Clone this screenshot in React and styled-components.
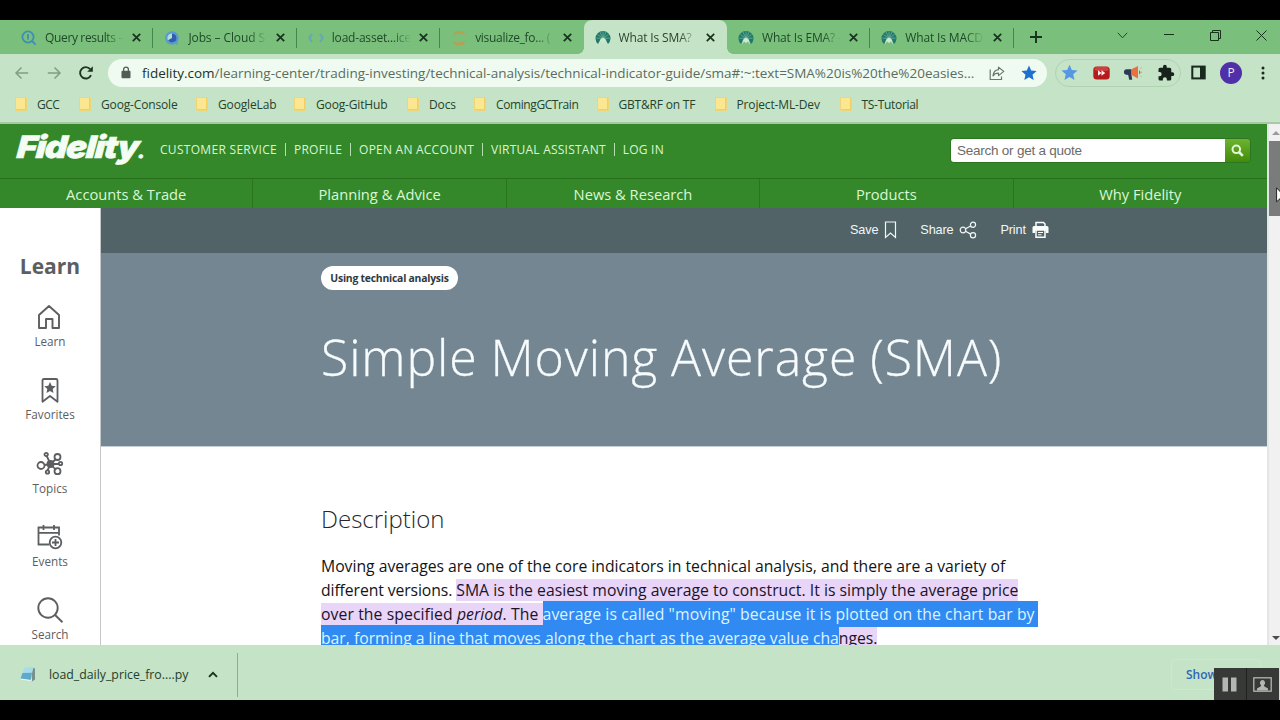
import styled, { createGlobalStyle } from 'styled-components'

const GlobalStyle = createGlobalStyle`
  * {
    box-sizing: border-box;
  }
  body {
    margin: 0;
    background: #000000;
    overflow: hidden;
    font-family: 'Open Sans', 'Noto Sans', sans-serif;
  }
  svg {
    display: block;
    flex: none;
  }
`

const StyledScreen = styled.div`
  position: relative;
  display: flex;
  flex-direction: column;
  width: 1280px;
  height: 720px;
  padding: 20px 0;
  background: #000000;
  overflow: hidden;
  white-space: nowrap;
`

/* tab strip */
const StyledTabStrip = styled.div`
  display: flex;
  height: 34px;
  padding-left: 10px;
  background: #7abf7b;
`

const StyledTab = styled.div`
  position: relative;
  display: flex;
  align-items: center;
  width: 143.4px;
  padding: 1px 12px 0 11px;
  border-radius: 8px 8px 0 0;
  background: ${({ $active }) => ($active ? '#c5e3c6' : 'transparent')};
  color: ${({ $active }) => ($active ? '#294330' : '#1f4a29')};
  &::before {
    content: '';
    position: absolute;
    display: ${({ $active }) => ($active ? 'block' : 'none')};
    left: -6px;
    right: -6px;
    bottom: 0;
    height: 6px;
    background:
      radial-gradient(circle at 0 0, transparent 5.5px, #c5e3c6 6px) left / 6px 6px no-repeat,
      radial-gradient(circle at 100% 0, transparent 5.5px, #c5e3c6 6px) right / 6px 6px no-repeat;
  }
  &::after {
    content: '';
    position: absolute;
    right: 0;
    top: 8px;
    width: 1px;
    height: 20px;
    background: ${({ $divider }) => ($divider ? '#44874a' : 'transparent')};
  }
`

const StyledTabTitle = styled.div`
  width: 82px;
  margin-left: 8px;
  overflow: hidden;
  font-size: 12px;
  line-height: 20px;
  letter-spacing: ${({ $spacing }) => $spacing || '-0.2px'};
  mask-image: linear-gradient(90deg, #000 74%, transparent 96%);
`

const StyledTabClose = styled.div`
  margin-left: auto;
`

const StyledNewTab = styled.div`
  display: flex;
  align-items: center;
  margin-left: 16px;
`

const StyledWindowControls = styled.div`
  display: grid;
  grid-template-columns: repeat(4, 46.3px);
  place-items: center;
  height: 30px;
  margin-left: auto;
  margin-right: -5px;
`

/* address bar */
const StyledToolbar = styled.div`
  display: flex;
  align-items: center;
  height: 37px;
  padding: 0 10px 0 14px;
  background: #c5e3c6;
`

const StyledNavButtons = styled.div`
  display: flex;
  gap: 16px;
  width: 94px;
`

const StyledOmnibox = styled.div`
  display: flex;
  align-items: center;
  width: 939px;
  height: 28px;
  padding: 0 10px 0 13px;
  border-radius: 14px;
  background: #effbf0;
`

const StyledUrl = styled.div`
  margin-left: 11px;
  color: #5d6b60;
  font-size: 13.5px;
  letter-spacing: -0.02px;
  b {
    color: #203326;
    font-weight: 400;
  }
`

const StyledOmniboxActions = styled.div`
  display: flex;
  align-items: center;
  gap: 16px;
  margin-left: auto;
`

const StyledExtensions = styled.div`
  display: flex;
  align-items: center;
  gap: 14.5px;
  height: 28px;
  margin-left: 8px;
  padding: 0 5px;
  border: 1px solid #b0d3b2;
  border-radius: 14px;
`

const StyledToolbarEnd = styled.div`
  display: flex;
  align-items: center;
  gap: 14px;
  margin-left: auto;
`

const StyledAvatar = styled.div`
  width: 22px;
  height: 22px;
  border-radius: 50%;
  background: #5030a8;
  color: #f1eafa;
  font-size: 12px;
  line-height: 22px;
  text-align: center;
`

/* bookmarks */
const StyledBookmarks = styled.div`
  display: flex;
  height: 33px;
  padding: 0 0 5px 15px;
  background: #c5e3c6;
  border-bottom: 2px solid #a9c8a8;
`

const StyledBookmark = styled.div`
  display: flex;
  align-items: center;
  gap: 10px;
  width: ${({ $width }) => $width}px;
  color: #25432c;
  font-size: 12px;
  letter-spacing: ${({ $spacing }) => $spacing || '-0.15px'};
`

const StyledFolder = styled.div`
  width: 12px;
  height: 14px;
  border: 1px solid #eed676;
  border-radius: 1px;
  background: #fbe792;
  box-shadow: inset -1px -1px 0 #f2cf62;
`

/* page */
const StyledPage = styled.div`
  display: flex;
  flex: 1;
  min-height: 0;
  background: #ffffff;
`

const StyledSite = styled.div`
  display: flex;
  flex-direction: column;
  width: 1267px;
  overflow: hidden;
`

const StyledHeader = styled.div`
  display: flex;
  align-items: center;
  flex: none;
  height: 54px;
  padding: 0 16px;
  background: #358829;
`

const StyledLogo = styled.div`
  width: 144px;
  color: #f4fdf3;
  font-family: 'Inter', 'Liberation Sans', sans-serif;
  font-size: 31px;
  font-style: italic;
  font-weight: 900;
  letter-spacing: -1.1px;
  line-height: 40px;
  margin-top: -3px;
  transform: scaleX(1.12) skewX(-4deg);
  transform-origin: 0 75%;
  -webkit-text-stroke: 0.6px #f4fdf3;
  small {
    font-size: 18px;
    letter-spacing: 0;
  }
`

const StyledUserLinks = styled.div`
  display: flex;
  align-items: center;
  margin-top: -4px;
`

const StyledUserLink = styled.div`
  padding: 0 8px;
  border-left: ${({ $first }) => ($first ? 'none' : '1px solid #b4deae')};
  color: #d9f7d5;
  font-size: 12px;
  letter-spacing: 0.23px;
  line-height: 13px;
  &:first-child {
    padding-left: 0;
    letter-spacing: 0.3px;
  }
`

const StyledSearch = styled.div`
  display: flex;
  width: 301px;
  height: 25px;
  margin: -2px 0 0 auto;
  border: 1px solid #2d7620;
  border-radius: 4px;
  overflow: hidden;
`

const StyledSearchInput = styled.div`
  flex: 1;
  padding-left: 6px;
  background: #ffffff;
  color: #6b6b6b;
  font-family: 'Liberation Sans', sans-serif;
  font-size: 13.5px;
  letter-spacing: -0.24px;
  line-height: 23px;
`

const StyledSearchButton = styled.div`
  display: grid;
  place-items: center;
  width: 25px;
  background: linear-gradient(#6db32f, #438b0d);
`

const StyledMainNav = styled.div`
  display: grid;
  grid-template-columns: repeat(5, 1fr);
  flex: none;
  height: 30px;
  border-top: 1px solid #26701b;
  background: #358829;
`

const StyledNavItem = styled.div`
  border-right: 1px solid #2a741c;
  color: #d9f7d5;
  font-size: 14.7px;
  font-weight: 500;
  line-height: 31px;
  text-align: center;
  &:last-child {
    border-right: none;
  }
`

const StyledBody = styled.div`
  display: flex;
  flex: 1;
  min-height: 0;
`

const StyledSidebar = styled.div`
  display: flex;
  flex-direction: column;
  flex: none;
  align-items: center;
  width: 101px;
  padding-top: 43px;
  border-right: 1px solid #c4c6c8;
  color: #5c5e60;
`

const StyledSidebarTitle = styled.div`
  font-size: 21px;
  font-weight: 700;
  line-height: 30px;
`

const StyledSidebarItem = styled.div`
  display: flex;
  flex-direction: column;
  flex: none;
  align-items: center;
  gap: 2px;
  height: 73.3px;
  font-size: 11.7px;
  line-height: 16px;
`

const StyledSidebarList = styled.div`
  padding-top: 22px;
`

const StyledArticle = styled.div`
  flex: 1;
  overflow: hidden;
`

const StyledActions = styled.div`
  display: flex;
  align-items: center;
  gap: 23px;
  height: 45px;
  padding: 0 0 1px 749px;
  background: #516367;
`

const StyledAction = styled.div`
  display: flex;
  align-items: center;
  gap: 6px;
  color: #f1f7f8;
  font-family: 'Liberation Sans', sans-serif;
  font-size: 12.7px;
  letter-spacing: -0.15px;
`

const StyledHero = styled.div`
  height: 194px;
  padding: 13px 0 0 220px;
  border-bottom: 1px solid #c5cfd5;
  background: #748691;
`

const StyledTag = styled.div`
  width: 137px;
  height: 24px;
  border-radius: 12px;
  background: #ffffff;
  color: #303a3f;
  font-size: 10.4px;
  font-weight: 700;
  letter-spacing: -0.23px;
  line-height: 24px;
  text-align: center;
`

const StyledTitle = styled.h1`
  margin: 32px 0 0;
  color: #f6fbfd;
  font-size: 50px;
  font-weight: 300;
  letter-spacing: 0.9px;
  word-spacing: -1px;
  line-height: 70px;
  -webkit-text-stroke: 0.3px #f6fbfd;
`

const StyledContent = styled.div`
  padding: 54px 0 0 220px;
`

const StyledHeading = styled.h2`
  margin: 0;
  color: #24282b;
  font-size: 24px;
  font-weight: 300;
  line-height: 36px;
`

const StyledText = styled.p`
  margin: 17px 0 0;
  color: #121417;
  font-size: 15.75px;
  line-height: 24px;
`

const StyledLine = styled.span`
  display: block;
  height: 24px;
  letter-spacing: ${({ $spacing }) => $spacing || '-0.02px'};
`

const StyledMark = styled.mark`
  background: #e8d5f7;
  color: #21122c;
  letter-spacing: ${({ $spacing }) => $spacing || 'inherit'};
`

const StyledSelection = styled.span`
  padding: ${({ $tail }) => ($tail ? '2px 3px 2px 0' : '2px 0')};
  background: #308af2;
  color: #dff3ff;
`

/* scrollbar */
const StyledScrollbar = styled.div`
  display: flex;
  flex-direction: column;
  justify-content: space-between;
  width: 13px;
  padding-bottom: 5px;
  border-left: 2px solid #e3e7e3;
  background: #f1f1f1;
`

const StyledScrollTrack = styled.div`
  padding-top: 7px;
`

const StyledThumb = styled.div`
  height: 75px;
  margin-top: 6px;
  background: #7a7b7b;
`

const StyledArrow = styled.div`
  width: 0;
  height: 0;
  margin-left: 3px;
  border: 4px solid transparent;
  border-top: ${({ $down }) => ($down ? '4px solid #4c4c4c' : 'none')};
  border-bottom: ${({ $down }) => ($down ? 'none' : '4px solid #9b9b9b')};
`

/* downloads */
const StyledDownloads = styled.div`
  display: flex;
  align-items: center;
  height: 55px;
  padding-left: 19px;
  background: #c5e3c6;
`

const StyledDownload = styled.div`
  display: flex;
  align-items: center;
  gap: 12px;
  width: 219px;
  height: 44px;
  margin-top: 4px;
  border-right: 1px solid #8cae8e;
  color: #233f2b;
  font-size: 12.3px;
`

const StyledCaret = styled.div`
  margin-left: 8px;
`

const StyledShowAll = styled.div`
  width: 90px;
  height: 31px;
  margin: 3px 19px 0 auto;
  padding-left: 14px;
  border: 1px solid #cde8cf;
  border-radius: 4px;
  color: #2d67b5;
  font-size: 12px;
  font-weight: 600;
  line-height: 29px;
`

const StyledRecorder = styled.div`
  position: absolute;
  right: 1px;
  bottom: 20px;
  display: grid;
  grid-template-columns: 32px 32px;
  gap: 1px;
  width: 65px;
  height: 32px;
  background: #1f2220;
`

const StyledRecorderButton = styled.div`
  display: grid;
  place-items: center;
  padding: 1px 2px 0 0;
  background: #363936;
`

const StyledCursor = styled.div`
  position: absolute;
  top: 187px;
  left: 1276px;
`

const QueryIcon = () => (
  <svg width="16" height="16" viewBox="0 0 16 16" fill="none" stroke="#3d8fb4" strokeWidth="1.8">
    <circle cx="7" cy="7" r="5.6" />
    <path d="M11 11l3.6 3.6M7 4v5.5" />
  </svg>
)

const JobsIcon = () => (
  <svg width="16" height="16" viewBox="0 0 16 16">
    <path d="M8 1.2a6.8 6.8 0 1 0 3.6 12.5l2 1.4v-3.3A6.8 6.8 0 0 0 8 1.2z" fill="#5b9cce" />
    <circle cx="8" cy="8" r="4.6" fill="#b7dcd0" />
    <path d="M8 3.4a4.6 4.6 0 1 1-4 6.8L8 8z" fill="#2c5fb4" />
  </svg>
)

const CodeIcon = () => (
  <svg width="16" height="16" viewBox="0 0 16 16" fill="none" stroke="#64a8b4" strokeWidth="2">
    <path d="M4 4L1.400 8l2.600 4M12 4l2.600 4-2.600 4" />
  </svg>
)

const JupyterIcon = () => (
  <svg width="16" height="16" viewBox="0 0 16 16" fill="#b99f50">
    <path d="M1.500 5.500C3 -.5 13 -.5 14.500 5.500 11 3.600 5 3.600 1.500 5.500zM1.500 11c1.500 6 11.500 6 13 0-3.500 1.900-9.500 1.900-13 0z" />
  </svg>
)

const FidelityIcon = () => (
  <svg width="16" height="16" viewBox="0 0 16 16">
    <path d="M3 14A7.500 7.500 0 1 1 13 14l-1.500-2.500-7 0z" fill="#22796a" />
    <path d="M8 8.500L2.500 4.500M8 8.500L5 2M8 8.500V1.500M8 8.500l3-6.500M8 8.500l5.500-4M8 8.500l-6.500-.4M8 8.500l6.500-.4" stroke="#9ad0b6" strokeWidth=".5" />
    <path d="M3.800 14.500L5 10a3.200 3.200 0 0 1 6 0l1.200 4.500-2.200-3-2 1.500-2-1.500z" fill="#cdebd3" />
  </svg>
)

const CloseIcon = () => (
  <svg width="9" height="9" viewBox="0 0 9 9" stroke="#17321c" strokeWidth="1.7">
    <path d="M.8.800l7.400 7.400M8.200.800L.8 8.200" />
  </svg>
)

const BackIcon = ({ forward }) => (
  <svg width="16" height="16" viewBox="0 0 16 16" fill="none" stroke="#80a083" strokeWidth="1.500">
    <path d={forward ? 'M1.800 8h12M8.500 2.500L14 8l-5.500 5.500' : 'M14.200 8h-12M7.500 2.500L2 8l5.500 5.500'} />
  </svg>
)

const ReloadIcon = () => (
  <svg width="16" height="16" viewBox="0 0 16 16" fill="none" stroke="#1f3523" strokeWidth="1.900">
    <path d="M13 10.200A5.700 5.700 0 1 1 12.200 4.200" />
    <path d="M14.800 1.200v5.600H9.200z" fill="#1f3523" stroke="none" />
  </svg>
)

const LockIcon = () => (
  <svg width="10" height="13" viewBox="0 0 10 13">
    <rect x=".5" y="4.800" width="9" height="7.500" rx="1" fill="#505c54" />
    <path d="M2.600 5V3.500a2.400 2.400 0 0 1 4.800 0V5" fill="none" stroke="#505c54" strokeWidth="1.300" />
  </svg>
)

const SendIcon = () => (
  <svg width="16" height="16" viewBox="0 0 16 16" fill="none" stroke="#69766d" strokeWidth="1.200">
    <path d="M1.200 4.500v10h11.300v-3" />
    <path d="M9.500 2.200l5.300 4.200-5.300 4.200V8.200c-2.800 0-4.400.8-5.500 2.700.3-3.400 2.200-5.700 5.500-6.200z" strokeLinejoin="round" />
  </svg>
)

const StarIcon = ({ color, size = 16 }) => (
  <svg width={size} height={size} viewBox="0 0 16 16" fill={color}>
    <path d="M8 .6l2.200 5 5.400.5-4.100 3.600 1.200 5.400L8 12.300l-4.700 2.800 1.200-5.400L.4 6.100l5.400-.5z" />
  </svg>
)

const ForwardBadge = () => (
  <svg width="17" height="14" viewBox="0 0 17 14">
    <rect x=".3" y=".5" width="16.400" height="13" rx="3.500" fill="#b51a1d" />
    <rect x="1.500" y="1" width="14" height="4" rx="2" fill="#cf3f3e" />
    <path d="M5 4.300l3.500 2.700L5 9.700zM8.500 4.300L12.300 7 8.500 9.700z" fill="#ffeeee" />
  </svg>
)

const MegaphoneIcon = () => (
  <svg width="18" height="16" viewBox="0 0 18 16">
    <path d="M7.500 4.200H3a2.600 2.600 0 0 0-.5 5.600L4.200 10l1 4.800h3L7.500 10z" fill="#2d3a55" />
    <path d="M7.500 4.200L14 1v12.400L7.500 10z" fill="#e9703f" />
    <path d="M15 5.200a2.300 2.300 0 0 1 0 4.200z" fill="#c9573c" />
    <path d="M16.500 3.500l1-.8M17 7.300h1M16.500 11l1 .8" stroke="#e9904f" />
  </svg>
)

const PuzzleIcon = () => (
  <svg width="18" height="18" viewBox="0 0 24 24" fill="#17231a">
    <path d="M20.500 11H19V7a2 2 0 0 0-2-2h-4V3.500a2.500 2.500 0 0 0-5 0V5H4a2 2 0 0 0-2 2v3.800h1.500a2.700 2.700 0 0 1 0 5.400H2V20a2 2 0 0 0 2 2h3.800v-1.500a2.700 2.700 0 0 1 5.400 0V22H17a2 2 0 0 0 2-2v-4h1.500a2.500 2.500 0 0 0 0-5z" />
  </svg>
)

const PanelIcon = () => (
  <svg width="15" height="15" viewBox="0 0 15 15">
    <rect x="1.300" y="1.600" width="12.400" height="11.800" fill="none" stroke="#1a291d" strokeWidth="2" />
    <path d="M9 1h5v13H9z" fill="#1a291d" />
  </svg>
)

const DotsIcon = () => (
  <svg width="14" height="16" viewBox="0 0 14 16" fill="#1a291d">
    <circle cx="7" cy="3" r="1.500" />
    <circle cx="7" cy="8" r="1.500" />
    <circle cx="7" cy="13" r="1.500" />
  </svg>
)

const SearchGlyph = () => (
  <svg width="13" height="13" viewBox="0 0 13 13" fill="none" stroke="#e6f7d8">
    <circle cx="5.300" cy="5.300" r="3.800" strokeWidth="2" />
    <path d="M8 8l3.800 3.800" strokeWidth="2.500" />
  </svg>
)

const BookmarkIcon = () => (
  <svg width="13" height="18" viewBox="0 0 13 18" fill="none" stroke="#f1f7f8" strokeWidth="1.200">
    <path d="M1.500 1h10v15.500l-5-4.500-5 4.500z" />
  </svg>
)

const ShareIcon = () => (
  <svg width="18" height="18" viewBox="0 0 18 18" fill="none" stroke="#f1f7f8" strokeWidth="1.200">
    <circle cx="4" cy="9" r="2.800" />
    <circle cx="14" cy="3.800" r="2.600" />
    <circle cx="14" cy="14.300" r="2.600" />
    <path d="M6.500 7.700l5.200-2.700M6.500 10.300l5.200 2.800" />
  </svg>
)

const PrintIcon = () => (
  <svg width="17" height="18" viewBox="0 0 17 18">
    <path d="M4 5V1.500h7.500L13 3v2" fill="none" stroke="#fbfefe" strokeWidth="1.500" />
    <path d="M2 5h13a1.500 1.500 0 0 1 1.500 1.500V12H14V9.500H3V12H.5V6.500A1.500 1.500 0 0 1 2 5z" fill="#fbfefe" />
    <path d="M4 9v7.300h9V9z" fill="#516367" stroke="#fbfefe" strokeWidth="1.500" />
    <path d="M6 11.500h5M6 13.800h3.500" stroke="#fbfefe" />
  </svg>
)

const HomeIcon = () => (
  <svg width="28" height="28" viewBox="0 0 28 28" fill="none" stroke="#5c5e60" strokeWidth="1.900" strokeLinejoin="round">
    <path d="M3 12L13 3l10 9v13h-6.500v-9h-6.500v9H3z" />
  </svg>
)

const FavoriteIcon = () => (
  <svg width="28" height="28" viewBox="0 0 28 28" fill="none" stroke="#5c5e60" strokeWidth="1.800" strokeLinejoin="round">
    <path d="M6.500 4.500Q6.500 3 8 3h12q1.500 0 1.500 1.500v21.300L14 20l-7.500 5.800z" />
    <path d="M14 6l1.700 3.700 4 .5-3 2.700.8 4-3.500-2-3.500 2 .8-4-3-2.700 4-.5z" fill="#5c5e60" stroke="none" />
  </svg>
)

const TopicsIcon = () => (
  <svg width="28" height="28" viewBox="0 0 28 28" fill="none" stroke="#5c5e60" strokeWidth="1.800">
    <path d="M14.500 14L10.500 5.500M14.500 14l5.500-5M14.500 14h8M14.500 14l5.500 6M14.500 14l-3 6.500M14.500 14l-6 1" />
    <circle cx="14.500" cy="14" r="3" fill="#5c5e60" />
    <circle cx="5" cy="15.500" r="3.500" />
    <circle cx="10.200" cy="4.500" r="1.700" />
    <circle cx="21.500" cy="7" r="3" />
    <circle cx="24.500" cy="13.500" r="1.700" />
    <circle cx="21.500" cy="21.200" r="3" />
    <circle cx="11.500" cy="22" r="1.700" />
  </svg>
)

const EventsIcon = () => (
  <svg width="28" height="28" viewBox="0 0 28 28" fill="none" stroke="#5c5e60" strokeWidth="1.800">
    <path d="M23 12.500V4.500H2.500v17H13M2.500 9.800H23M7.500 2v5M18 2v5" />
    <circle cx="19.500" cy="19.500" r="5.800" />
    <path d="M19.500 16v7M16 19.500h7" />
  </svg>
)

const LearnSearchIcon = () => (
  <svg width="28" height="28" viewBox="0 0 28 28" fill="none" stroke="#5c5e60" strokeWidth="1.900">
    <circle cx="12" cy="12" r="9.700" />
    <path d="M18.800 18.800l7.700 7.500" />
  </svg>
)

const FileIcon = () => (
  <svg width="18" height="17" viewBox="0 0 18 17">
    <path d="M12.500 1.500l3.500 1v11l-3 2z" fill="#78908e" />
    <path d="M5.500 1.500l9-.5-3 13-10-1.500z" fill="#a9dcea" />
    <path d="M3.500 7l9.500-.3-1.500 7.300-10-1.300z" fill="#5fa9cb" />
    <path d="M1.500 13l10 1.500 1.500-1" fill="none" stroke="#eaf8f5" />
  </svg>
)

const tabs = [
  { title: 'Query results – ', icon: <QueryIcon />, divider: true, spacing: '-0.35px' },
  { title: 'Jobs – Cloud Sc', icon: <JobsIcon />, divider: true, spacing: '-0.1px' },
  { title: 'load-asset...ice', icon: <CodeIcon />, divider: true },
  { title: 'visualize_fo... (', icon: <JupyterIcon />, spacing: '-0.3px' },
  { title: 'What Is SMA?', icon: <FidelityIcon />, active: true, spacing: '-0.15px' },
  { title: 'What Is EMA? -', icon: <FidelityIcon />, divider: true, spacing: '-0.15px' },
  { title: 'What Is MACD', icon: <FidelityIcon />, divider: true, spacing: '-0.15px' },
]

const bookmarks = [
  { name: 'GCC', width: 64, spacing: '-0.5px' },
  { name: 'Goog-Console', width: 117 },
  { name: 'GoogleLab', width: 98 },
  { name: 'Goog-GitHub', width: 113 },
  { name: 'Docs', width: 67 },
  { name: 'ComingGCTrain', width: 122.5, spacing: '-0.4px' },
  { name: 'GBT&RF on TF', width: 118, spacing: '-0.2px' },
  { name: 'Project-ML-Dev', width: 125 },
  { name: 'TS-Tutorial', width: 80, spacing: '-0.3px' },
]

const userLinks = ['CUSTOMER SERVICE', 'PROFILE', 'OPEN AN ACCOUNT', 'VIRTUAL ASSISTANT', 'LOG IN']

const navItems = ['Accounts & Trade', 'Planning & Advice', 'News & Research', 'Products', 'Why Fidelity']

const sidebarItems = [
  { name: 'Learn', icon: <HomeIcon /> },
  { name: 'Favorites', icon: <FavoriteIcon /> },
  { name: 'Topics', icon: <TopicsIcon /> },
  { name: 'Events', icon: <EventsIcon /> },
  { name: 'Search', icon: <LearnSearchIcon /> },
]

function Browser() {
  return (
    <>
      <StyledTabStrip>
        {tabs.map(tab => (
          <StyledTab key={tab.title} $active={tab.active} $divider={tab.divider}>
            {tab.icon}
            <StyledTabTitle $spacing={tab.spacing}>{tab.title}</StyledTabTitle>
            <StyledTabClose>
              <CloseIcon />
            </StyledTabClose>
          </StyledTab>
        ))}
        <StyledNewTab>
          <svg width="12" height="12" viewBox="0 0 12 12" stroke="#17321c" strokeWidth="1.900">
            <path d="M6 0v12M0 6h12" />
          </svg>
        </StyledNewTab>
        <StyledWindowControls>
          <svg width="11" height="7" viewBox="0 0 11 7" fill="none" stroke="#23482a">
            <path d="M.8.800l4.700 5 4.700-5" />
          </svg>
          <svg width="10" height="2" viewBox="0 0 10 2">
            <path d="M0 .5h10" stroke="#17321c" />
          </svg>
          <svg width="11" height="11" viewBox="0 0 11 11" fill="none" stroke="#17321c">
            <path d="M.5 2.500h8v8h-8zM2.500 2.500v-2h8v8h-2" />
          </svg>
          <svg width="11" height="11" viewBox="0 0 11 11" stroke="#17321c">
            <path d="M.5.500l10 10M10.500.500l-10 10" />
          </svg>
        </StyledWindowControls>
      </StyledTabStrip>
      <StyledToolbar>
        <StyledNavButtons>
          <BackIcon />
          <BackIcon forward />
          <ReloadIcon />
        </StyledNavButtons>
        <StyledOmnibox>
          <LockIcon />
          <StyledUrl>
            <b>fidelity.com</b>
            /learning-center/trading-investing/technical-analysis/technical-indicator-guide/sma#:~:text=SMA%20is%20the%20easies...
          </StyledUrl>
          <StyledOmniboxActions>
            <SendIcon />
            <StarIcon color="#1d6fd0" />
          </StyledOmniboxActions>
        </StyledOmnibox>
        <StyledExtensions>
          <StarIcon color="#5597e3" size={17} />
          <ForwardBadge />
          <MegaphoneIcon />
          <PuzzleIcon />
        </StyledExtensions>
        <StyledToolbarEnd>
          <PanelIcon />
          <StyledAvatar>P</StyledAvatar>
          <DotsIcon />
        </StyledToolbarEnd>
      </StyledToolbar>
      <StyledBookmarks>
        {bookmarks.map(item => (
          <StyledBookmark key={item.name} $width={item.width} $spacing={item.spacing}>
            <StyledFolder />
            {item.name}
          </StyledBookmark>
        ))}
      </StyledBookmarks>
    </>
  )
}

function Sidebar() {
  return (
    <StyledSidebar>
      <StyledSidebarTitle>Learn</StyledSidebarTitle>
      <StyledSidebarList>
        {sidebarItems.map(item => (
          <StyledSidebarItem key={item.name}>
            {item.icon}
            {item.name}
          </StyledSidebarItem>
        ))}
      </StyledSidebarList>
    </StyledSidebar>
  )
}

function Article() {
  return (
    <StyledArticle>
      <StyledActions>
        <StyledAction>
          Save
          <BookmarkIcon />
        </StyledAction>
        <StyledAction>
          Share
          <ShareIcon />
        </StyledAction>
        <StyledAction>
          Print
          <PrintIcon />
        </StyledAction>
      </StyledActions>
      <StyledHero>
        <StyledTag>Using technical analysis</StyledTag>
        <StyledTitle>Simple Moving Average (SMA)</StyledTitle>
      </StyledHero>
      <StyledContent>
        <StyledHeading>Description</StyledHeading>
        <StyledText>
          <StyledLine>
            Moving averages are one of the core indicators in technical analysis, and there are a variety of
          </StyledLine>
          <StyledLine $spacing="-0.1px">
            different versions.{' '}
            <StyledMark $spacing="0.02px">
              SMA is the easiest moving average to construct. It is simply the average price
            </StyledMark>
          </StyledLine>
          <StyledLine $spacing="0.085px">
            <StyledMark>
              over the specified <i>period</i>. The{' '}
            </StyledMark>
            <StyledSelection $tail>
              average is called "moving" because it is plotted on the chart bar by
            </StyledSelection>
          </StyledLine>
          <StyledLine>
            <StyledSelection>
              bar, forming a line that moves along the chart as the average value cha
            </StyledSelection>
            <StyledMark>nges.</StyledMark>
          </StyledLine>
        </StyledText>
      </StyledContent>
    </StyledArticle>
  )
}

function App() {
  return (
    <StyledScreen>
      <GlobalStyle />
      <Browser />
      <StyledPage>
        <StyledSite>
          <StyledHeader>
            <StyledLogo>
              Fidelity<small>.</small>
            </StyledLogo>
            <StyledUserLinks>
              {userLinks.map((link, index) => (
                <StyledUserLink key={link} $first={index === 0}>
                  {link}
                </StyledUserLink>
              ))}
            </StyledUserLinks>
            <StyledSearch>
              <StyledSearchInput>Search or get a quote</StyledSearchInput>
              <StyledSearchButton>
                <SearchGlyph />
              </StyledSearchButton>
            </StyledSearch>
          </StyledHeader>
          <StyledMainNav>
            {navItems.map(item => (
              <StyledNavItem key={item}>{item}</StyledNavItem>
            ))}
          </StyledMainNav>
          <StyledBody>
            <Sidebar />
            <Article />
          </StyledBody>
        </StyledSite>
        <StyledScrollbar>
          <StyledScrollTrack>
            <StyledArrow />
            <StyledThumb />
          </StyledScrollTrack>
          <StyledArrow $down />
        </StyledScrollbar>
      </StyledPage>
      <StyledDownloads>
        <StyledDownload>
          <FileIcon />
          load_daily_price_fro....py
          <StyledCaret>
            <svg width="10" height="7" viewBox="0 0 10 7" fill="none" stroke="#17321c" strokeWidth="1.900">
              <path d="M1 5.800l4-4 4 4" />
            </svg>
          </StyledCaret>
        </StyledDownload>
        <StyledShowAll>Show</StyledShowAll>
      </StyledDownloads>
      <StyledRecorder>
        <StyledRecorderButton>
          <svg width="15" height="15" viewBox="0 0 15 15" fill="#b4b6b4">
            <path d="M.5.500h5.500v14H.5zM9 .5h5.500v14H9z" />
          </svg>
        </StyledRecorderButton>
        <StyledRecorderButton>
          <svg width="19" height="15" viewBox="0 0 19 15">
            <rect x=".8" y=".8" width="17.400" height="13.400" fill="none" stroke="#b4b6b4" strokeWidth="1.300" />
            <path d="M9.500 3a2.600 2.800 0 0 1 1.600 5v1.200l3.900 2.300V13.500H4v-2l3.900-2.300V8a2.600 2.800 0 0 1 1.600-5z" fill="#b4b6b4" />
          </svg>
        </StyledRecorderButton>
      </StyledRecorder>
      <StyledCursor>
        <svg width="12" height="18" viewBox="0 0 12 18">
          <path d="M.6.800v14l3.200-3 2.200 5 2-1-2.200-4.800h4.200z" fill="#fff" stroke="#222" />
        </svg>
      </StyledCursor>
    </StyledScreen>
  )
}

export default App
